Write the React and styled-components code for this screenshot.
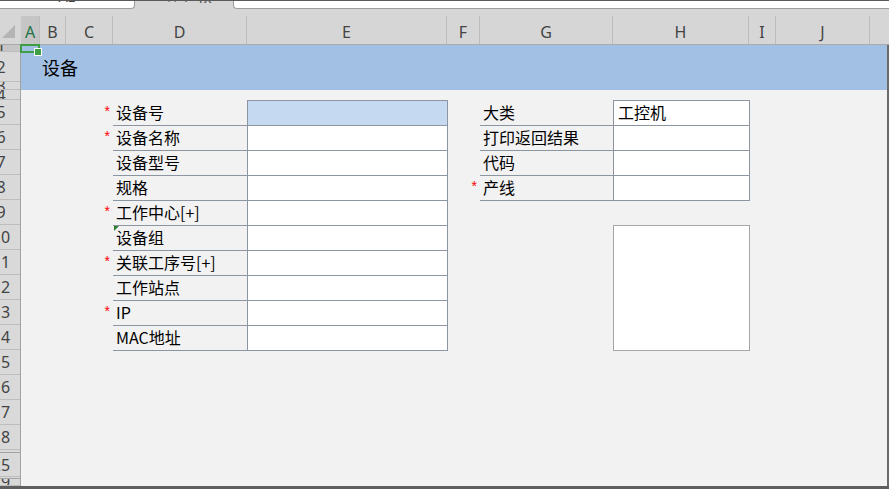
import React from 'react'
import styled, { createGlobalStyle } from 'styled-components'

const columns = [
    { key: 'A', width: 19, active: true },
    { key: 'B', width: 26 },
    { key: 'C', width: 47 },
    { key: 'D', width: 134 },
    { key: 'E', width: 200 },
    { key: 'F', width: 33 },
    { key: 'G', width: 133 },
    { key: 'H', width: 136 },
    { key: 'I', width: 27 },
    { key: 'J', width: 94 },
]

// row heights in px, a null label is a run of hidden rows
const rows = [
    { n: 1, h: 7, active: true },
    { n: 2, h: 30 },
    { n: 3, h: 8 },
    { n: 4, h: 10 },
    ...Array.from({ length: 14 }, (_, i) => ({ n: i + 5, h: 25 })),
    { n: null, h: 3 },
    { n: 25, h: 24 },
    { n: null, h: 2 },
    { n: 29, h: 0 },
]

const deviceFields = [
    { label: '设备号', required: true, active: true },
    { label: '设备名称', required: true },
    { label: '设备型号' },
    { label: '规格' },
    { label: '工作中心[+]', required: true },
    { label: '设备组', note: true },
    { label: '关联工序号[+]', required: true },
    { label: '工作站点' },
    { label: 'IP', required: true },
    { label: 'MAC地址' },
]

const extraFields = [
    { label: '大类', value: '工控机' },
    { label: '打印返回结果' },
    { label: '代码' },
    { label: '产线', required: true },
]

const FIRST_FORM_ROW = 5

const App = () => {
    return (
        <Window>
            <GlobalStyle />
            <FormulaStrip>
                <NameBox><span>A1</span></NameBox>
                <BarTools><span>✕ ✓ fx</span></BarTools>
                <FormulaInput />
            </FormulaStrip>

            <ColumnBar>
                <Corner>
                    <svg width="13" height="13" viewBox="0 0 13 13">
                        <polygon points="0,13 13,13 13,0" fill="#b4b4b4" />
                    </svg>
                </Corner>
                {columns.map(c => (
                    <ColHead key={c.key} $width={c.width} $active={c.active}>{c.key}</ColHead>
                ))}
                <ColHead $fill />
            </ColumnBar>

            <Body>
                <RowHeader>
                    {rows.map((r, i) => (
                        <RowHead key={i} $height={r.h} $active={r.active} $hidden={r.n === null}>
                            {r.n !== null && <span>{r.n}</span>}
                        </RowHead>
                    ))}
                </RowHeader>

                <Sheet>
                    <TitleBand>设备</TitleBand>

                    {deviceFields.map((f, i) => (
                        <React.Fragment key={f.label}>
                            {f.required && <Required $row={FIRST_FORM_ROW + i} $col={3}>*</Required>}
                            <Label $row={FIRST_FORM_ROW + i} $col={4} $note={f.note}>{f.label}</Label>
                            <Input $row={FIRST_FORM_ROW + i} $col={5} $active={f.active} />
                        </React.Fragment>
                    ))}

                    {extraFields.map((f, i) => (
                        <React.Fragment key={f.label}>
                            {f.required && <Required $row={FIRST_FORM_ROW + i} $col={6}>*</Required>}
                            <Label $row={FIRST_FORM_ROW + i} $col={7}>{f.label}</Label>
                            <Input $row={FIRST_FORM_ROW + i} $col={8}>{f.value}</Input>
                        </React.Fragment>
                    ))}

                    <MemoBox />

                    <Selection><Handle /></Selection>
                </Sheet>
            </Body>
            <StatusEdge />
        </Window>
    )
}

const GlobalStyle = createGlobalStyle`
    html, body {
        margin: 0;
        padding: 0;
    }
    body {
        background: #f2f2f2;
        font-family: "Noto Sans CJK SC", "Noto Sans", sans-serif;
    }
`

const Window = styled.div`
    width: 889px;
    height: 489px;
    overflow: hidden;
    display: flex;
    flex-direction: column;
    background: #f2f2f2;
`

const FormulaStrip = styled.div`
    height: 9px;
    flex: none;
    display: flex;
    background: #d6d6d6;
    border-top: 1px solid #5a5a5a;
    box-sizing: border-box;
`

const NameBox = styled.div`
    width: 135px;
    background: #fff;
    border-right: 1px solid #9c9c9c;
    border-bottom: 1px solid #9c9c9c;
    border-radius: 0 0 4px 0;
    box-sizing: border-box;
    display: flex;
    justify-content: center;
    align-items: flex-end;
    overflow: hidden;
    font: 14px "Liberation Sans", sans-serif;
    color: #444;
    line-height: 21px;
`

const BarTools = styled(NameBox)`
    width: 98px;
    background: transparent;
    border: none;
    font-family: "DejaVu Sans", sans-serif;
    color: #555;
    padding-left: 10px;
`

const FormulaInput = styled.div`
    flex: 1;
    background: #fff;
    border-left: 1px solid #9c9c9c;
    border-bottom: 1px solid #9c9c9c;
    border-radius: 0 0 0 4px;
`

const ColumnBar = styled.div`
    height: 36px;
    flex: none;
    display: flex;
    align-items: flex-end;
    background: #d6d6d6;
    border-bottom: 1px solid #a9a9a9;
    box-sizing: border-box;
`

const Corner = styled.div`
    width: 21px;
    align-self: stretch;
    flex: none;
    display: flex;
    align-items: flex-end;
    justify-content: flex-end;
    padding: 0 6px 6px 0;
    box-sizing: border-box;
`

const ColHead = styled.div`
    width: ${p => (p.$fill ? 'auto' : `${p.$width}px`)};
    flex: ${p => (p.$fill ? 1 : 'none')};
    height: 28px;
    box-sizing: border-box;
    border-right: ${p => (p.$fill ? 'none' : '1px solid #bcbcbc')};
    background: ${p => (p.$active ? '#c5c5c5' : 'transparent')};
    color: ${p => (p.$active ? '#217346' : '#444')};
    display: flex;
    justify-content: center;
    align-items: center;
    padding-top: 3px;
    font: 16px "Noto Sans", sans-serif;
    overflow: hidden;
`

const Body = styled.div`
    flex: 1;
    display: flex;
    min-height: 0;
`

const RowHeader = styled.div`
    width: 21px;
    flex: none;
    display: flex;
    flex-direction: column;
    background: #d9d9d9;
    border-right: 1px solid #a3a3a3;
    box-sizing: border-box;
    overflow: hidden;
`

const RowHead = styled.div`
    height: ${p => (p.$height ? `${p.$height}px` : 'auto')};
    flex: ${p => (p.$height ? 'none' : 1)};
    box-sizing: border-box;
    border-bottom: 1px solid ${p => (p.$hidden ? '#a3a3a3' : '#bdbdbd')};
    background: ${p => (p.$active ? '#c6c6c6' : 'transparent')};
    overflow: hidden;
    display: flex;
    align-items: center;

    & > span {
        flex: none;
        width: 42px;
        margin-left: -20px;
        text-align: center;
        font: 16px "Noto Sans", sans-serif;
        line-height: 20px;
        color: #444;
    }
`

const Sheet = styled.div`
    flex: 1;
    position: relative;
    display: grid;
    grid-template-columns: 19px 26px 47px 134px 200px 33px 133px 136px 27px 94px 1fr;
    grid-template-rows: 7px 30px 8px 10px repeat(14, 25px) 1fr;
    background: #f2f2f2;
    border-right: 2px solid #6a6a6a;
`

const TitleBand = styled.div`
    grid-column: 1 / -1;
    grid-row: 1 / 4;
    background: #a2c0e4;
    display: flex;
    align-items: center;
    padding: 0 0 2px 21px;
    font-size: 18px;
    line-height: 1;
    color: #000;
`

const Cell = styled.div`
    grid-row: ${p => p.$row};
    grid-column: ${p => p.$col};
    box-sizing: border-box;
`

const Required = styled(Cell)`
    display: flex;
    justify-content: flex-end;
    align-items: flex-start;
    padding: 3px 3px 0 0;
    font: 14px "Liberation Sans", sans-serif;
    line-height: 16px;
    color: #ff0000;
`

const Label = styled(Cell)`
    position: relative;
    height: 26px;
    border-bottom: 1px solid #8b96a2;
    display: flex;
    align-items: center;
    padding: 0 0 2px 3px;
    font-size: 16px;
    line-height: 1;
    color: #000;
    white-space: nowrap;

    &::before {
        content: '';
        display: ${p => (p.$note ? 'block' : 'none')};
        position: absolute;
        left: 1px;
        top: 1px;
        border-top: 5px solid #2e7d32;
        border-right: 5px solid transparent;
    }
`

const Input = styled(Cell)`
    width: calc(100% + 1px);
    height: 26px;
    border: 1px solid #8b96a2;
    background: ${p => (p.$active ? '#c5d9f1' : '#fff')};
    display: flex;
    align-items: center;
    padding: 0 0 2px 4px;
    font-size: 16px;
    line-height: 1;
    color: #000;
`

const MemoBox = styled.div`
    grid-column: 8;
    grid-row: 10 / 15;
    width: calc(100% + 1px);
    height: 126px;
    box-sizing: border-box;
    border: 1px solid #a6a6a6;
    background: #fff;
`

const Selection = styled.div`
    position: absolute;
    left: -1px;
    top: -1px;
    width: 20px;
    height: 9px;
    box-sizing: border-box;
    border: 2px solid #3f9e43;
`

const Handle = styled.div`
    position: absolute;
    right: -4px;
    bottom: -5px;
    width: 6px;
    height: 6px;
    background: #3f9e43;
    border: 1px solid #fff;
`

const StatusEdge = styled.div`
    height: 3px;
    flex: none;
    background: #5e5e5e;
`

export default App
